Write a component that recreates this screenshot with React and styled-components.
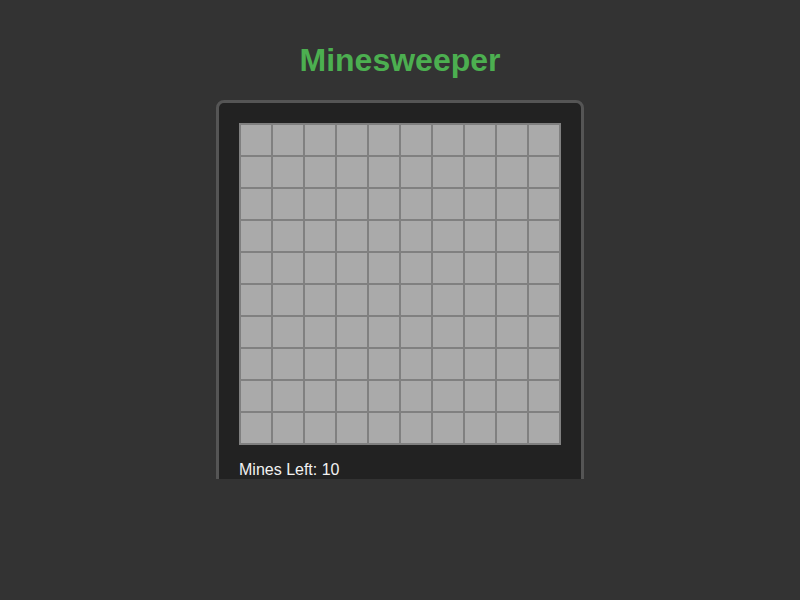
import React from "react";
import styled, { createGlobalStyle } from "styled-components";

const GlobalStyle = createGlobalStyle`
  html, body {
    margin: 0;
    padding: 0;
    background: #333333;
  }
  body {
    font-family: "Liberation Sans", Arial, sans-serif;
  }
`;

const Page = styled.div`
  height: 479px;
  overflow: hidden;
  display: flex;
  flex-direction: column;
  align-items: center;
  padding-top: 42px;
  box-sizing: border-box;
`;

const Title = styled.h1`
  margin: 0 0 22px;
  font-size: 32px;
  line-height: 36px;
  font-weight: bold;
  color: #4caf50;
`;

const Panel = styled.div`
  background: #222222;
  border: 3px solid #555555;
  border-radius: 8px;
  padding: 20px 20px 60px;
  flex-shrink: 0;
`;

const Board = styled.div`
  display: grid;
  grid-template-columns: repeat(${(p) => p.$cols}, 32px);
  grid-auto-rows: 32px;
  border: 1px solid #808080;
  background: #808080;
`;

const Cell = styled.div`
  box-sizing: border-box;
  border: 1px solid #808080;
  background: #aaaaaa;
`;

const Status = styled.p`
  margin: 16px 0 0;
  font-size: 16px;
  line-height: 18px;
  color: #f2f2f2;
`;

export default function App() {
  const cells = Array.from({ length: 100 }, (_, i) => i);
  return (
    <>
      <GlobalStyle />
      <Page>
        <Title>Minesweeper</Title>
        <Panel>
          <Board $cols={10}>
            {cells.map((i) => (
              <Cell key={i} />
            ))}
          </Board>
          <Status>Mines Left: 10</Status>
        </Panel>
      </Page>
    </>
  );
}
